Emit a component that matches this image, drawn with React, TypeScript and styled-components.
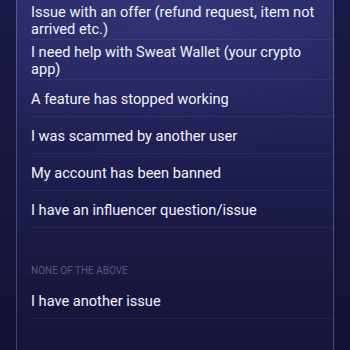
import React from 'react';
import styled, { createGlobalStyle } from 'styled-components';

const GlobalStyle = createGlobalStyle`
	html, body {
		margin: 0;
		padding: 0;
		width: 350px;
		height: 350px;
		overflow: hidden;
		background: #14143a;
	}
	body {
		font-family: Roboto, "Noto Sans", sans-serif;
		-webkit-font-smoothing: antialiased;
	}
`;

const topics = [
	'Issue with an offer (refund request, item not arrived etc.)',
	'I need help with Sweat Wallet (your crypto app)',
	'A feature has stopped working',
	'I was scammed by another user',
	'My account has been banned',
	'I have an influencer question/issue',
];

export default function App() {
	return (
		<Screen>
			<GlobalStyle />
			<Card>
				<Group>
					{topics.map((t) => (
						<Row key={t}>
							<RowText>{t}</RowText>
						</Row>
					))}
				</Group>
				<Group>
					<GroupTitle>NONE OF THE ABOVE</GroupTitle>
					<Row>
						<RowText>I have another issue</RowText>
					</Row>
				</Group>
			</Card>
		</Screen>
	);
}

const Screen = styled.div`
	width: 350px;
	height: 350px;
	padding: 0 16px;
	box-sizing: border-box;
	background: linear-gradient(180deg, #1a1a48 0%, #16163c 60%, #121232 100%);
	overflow: hidden;
`;

const Card = styled.div`
	height: 100%;
	border-left: 1px solid rgba(190, 190, 235, 0.28);
	border-right: 1px solid rgba(190, 190, 235, 0.32);
	background:
		radial-gradient(ellipse 120% 45% at 50% 0%, rgba(64, 64, 140, 0.6), rgba(60, 60, 130, 0) 100%),
		linear-gradient(180deg, #23235a 0%, #1e1e51 45%, #18183f 80%, #151539 100%);
	display: flex;
	flex-direction: column;
`;

const Group = styled.div`
	display: flex;
	flex-direction: column;
`;

const GroupTitle = styled.div`
	margin-left: 14px;
	padding: 37px 0 5px;
	font-size: 10px;
	line-height: 12px;
	color: #565880;
`;

const Row = styled.div`
	margin-left: 14px;
	padding: 4px 12px 2px 0;
	min-height: 37px;
	box-sizing: border-box;
	display: flex;
	align-items: center;
	border-bottom: 1px solid rgba(255, 255, 255, 0.05);
`;

const RowText = styled.div`
	font-size: 14.6px;
	line-height: 16.5px;
	color: #f2f2fa;
`;
